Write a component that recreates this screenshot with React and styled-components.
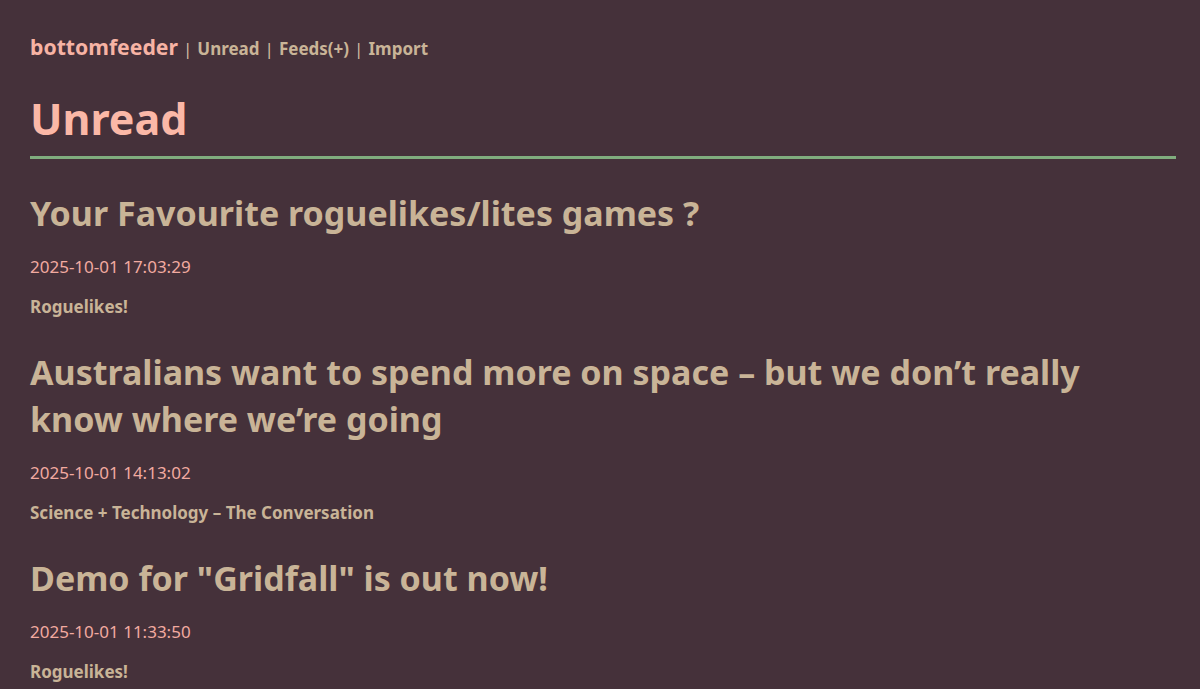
import React from 'react';
import styled, {createGlobalStyle} from 'styled-components';

const items = [
    {title: 'Your Favourite roguelikes/lites games ?', date: '2025-10-01 17:03:29', feed: 'Roguelikes!'},
    {title: 'Australians want to spend more on space – but we don’t really know where we’re going', date: '2025-10-01 14:13:02', feed: 'Science + Technology – The Conversation'},
    {title: 'Demo for "Gridfall" is out now!', date: '2025-10-01 11:33:50', feed: 'Roguelikes!'},
];

const App = () => {
    return (<Page>
        <GlobalStyle/>
        <Nav>
            <Brand href="#">bottomfeeder</Brand>
            <Sep>|</Sep>
            <NavLink href="#">Unread</NavLink>
            <Sep>|</Sep>
            <NavLink href="#">Feeds(+)</NavLink>
            <Sep>|</Sep>
            <NavLink href="#">Import</NavLink>
        </Nav>
        <Heading>Unread</Heading>
        <List>
            {items.map((item, i) => (
                <Item key={i}>
                    <Title href="#">{item.title}</Title>
                    <Date>{item.date}</Date>
                    <Feed>{item.feed}</Feed>
                </Item>
            ))}
        </List>
    </Page>);
};

export default App;

const GlobalStyle = createGlobalStyle`
  html, body {
    margin: 0;
    background: #45313a;
    font-family: "Noto Sans", "Open Sans", sans-serif;
  }
`;

const Page = styled.div`
  padding: 32px 24px 0 30px;
  min-height: 689px;
  box-sizing: border-box;
`;

const Nav = styled.nav`
  display: flex;
  align-items: baseline;
  gap: 5px;
  font-size: 17px;
  font-weight: 700;
  color: #c9b497;
`;

const Brand = styled.a`
  font-size: 21.2px;
  color: #f7b3a4;
  text-decoration: none;
`;

const NavLink = styled.a`
  color: #c9b497;
  text-decoration: none;
`;

const Sep = styled.span`
  font-weight: 400;
  color: #d2bea2;
`;

const Heading = styled.h1`
  margin: 30px 0 0;
  padding-bottom: 9px;
  font-size: 43px;
  line-height: 56px;
  font-weight: 700;
  color: #fbb8a7;
  border-bottom: 3px solid #80ad7e;
`;

const List = styled.div`
  display: flex;
  flex-direction: column;
`;

const Item = styled.article`
  display: flex;
  flex-direction: column;
  padding-top: 31px;
`;

const Title = styled.a`
  font-size: 34px;
  line-height: 47px;
  font-weight: 700;
  color: #c9b497;
  text-decoration: none;
`;

const Date = styled.div`
  margin-top: 18px;
  font-size: 17px;
  line-height: 23px;
  color: #f2aaa0;
`;

const Feed = styled.div`
  margin-top: 17px;
  font-size: 17px;
  line-height: 23px;
  font-weight: 700;
  color: #c9b497;
`;
